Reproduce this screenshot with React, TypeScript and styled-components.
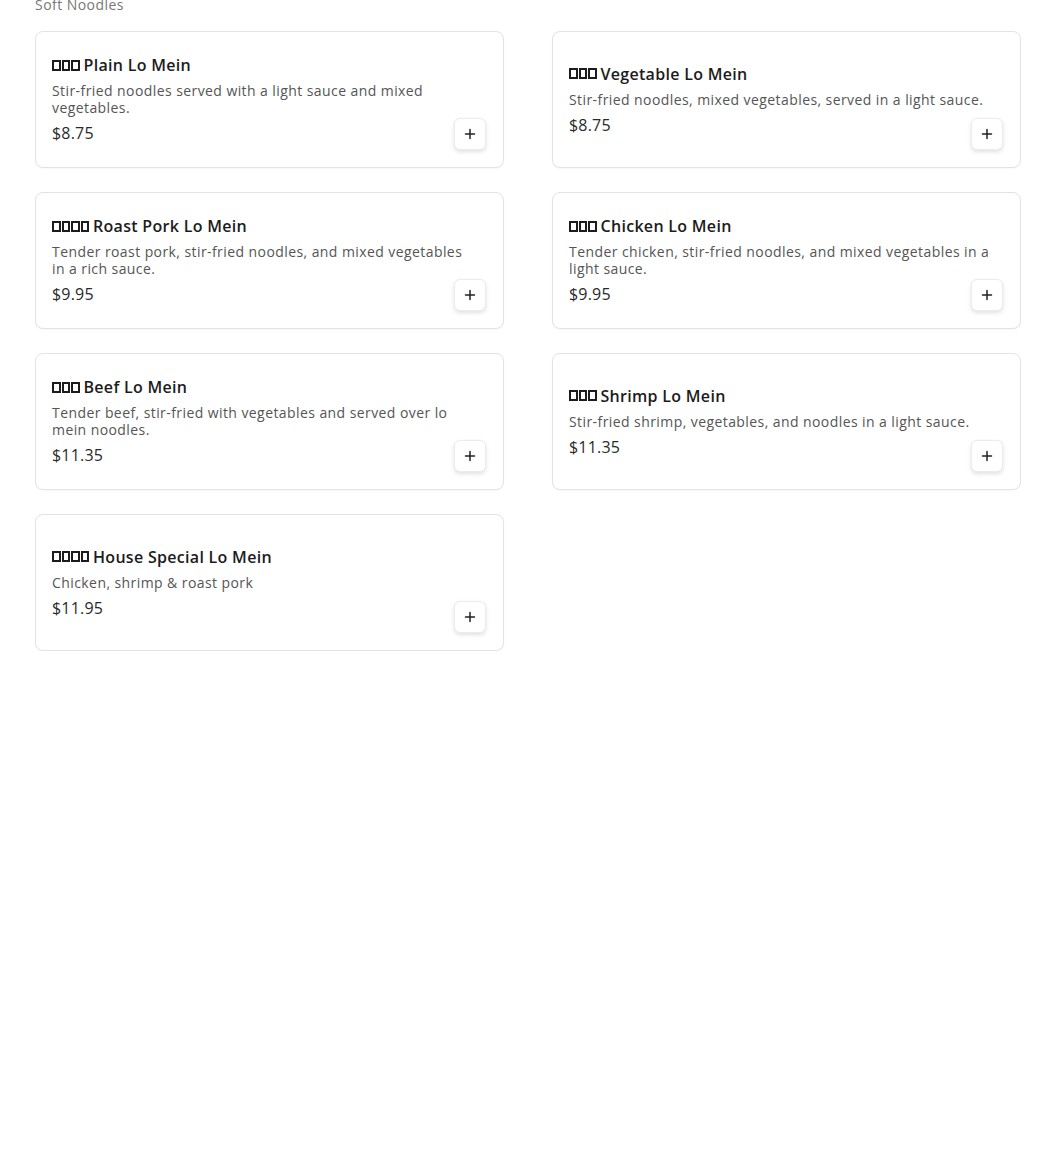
import React from "react";
import styled, { createGlobalStyle } from "styled-components";

const GlobalStyle = createGlobalStyle`
  html, body { margin: 0; padding: 0; background: #ffffff; }
  body { font-family: "Open Sans", "Noto Sans", sans-serif; color: #1a1a1a; }
`;

const Page = styled.main`
  padding: 0 29px 0 35px;
  margin-top: -5px;
`;

const SectionTitle = styled.h2`
  margin: 0 0 16px;
  font-size: 14px;
  line-height: 20px;
  font-weight: 400;
  letter-spacing: 0.45px;
  color: #777777;
`;

const Grid = styled.div`
  display: grid;
  grid-template-columns: 469px 469px;
  column-gap: 48px;
  row-gap: 24px;
`;

const Card = styled.article`
  box-sizing: border-box;
  min-height: 137px;
  display: grid;
  grid-template-areas: "stack";
  padding: 16px;
  border: 1px solid #e3e3e3;
  border-radius: 8px;
  background: #fff;
  box-shadow: 0 1px 2px rgba(0, 0, 0, 0.03);
`;

const Info = styled.div`
  grid-area: stack;
  align-self: center;
  min-width: 0;
  padding-right: 9px;
  margin-bottom: 1px;
`;

const Name = styled.h3`
  margin: 0;
  display: flex;
  align-items: center;
  font-size: 16px;
  line-height: 24px;
  font-weight: 600;
  letter-spacing: 0.3px;
  color: #1c1c1c;
`;

const Tofus = styled.span`
  display: inline-flex;
  gap: 1px;
  margin-right: 4px;
`;

const Tofu = styled.span`
  display: inline-block;
  box-sizing: border-box;
  width: 8.5px;
  height: 11px;
  border: 2px solid #1c1c1c;
`;

const Desc = styled.p`
  margin: 5px 0 0;
  font-size: 14px;
  line-height: 17px;
  letter-spacing: 0.42px;
  color: #555555;
`;

const Price = styled.div`
  margin-top: 5px;
  font-size: 16px;
  line-height: 24px;
  letter-spacing: 0.2px;
  color: #2a2a2a;
`;

const AddButton = styled.button`
  grid-area: stack;
  align-self: end;
  justify-self: end;
  width: 32px;
  height: 32px;
  margin: 0 1px 1px 0;
  display: flex;
  align-items: center;
  justify-content: center;
  padding: 0;
  border: 1px solid #ececec;
  border-radius: 6px;
  background: #fff;
  box-shadow: 0 2px 4px rgba(0, 0, 0, 0.12);
  cursor: pointer;
`;

const items = [
  { glyphs: 3, name: "Plain Lo Mein", desc: "Stir-fried noodles served with a light sauce and mixed vegetables.", price: "$8.75" },
  { glyphs: 3, name: "Vegetable Lo Mein", desc: "Stir-fried noodles, mixed vegetables, served in a light sauce.", price: "$8.75" },
  { glyphs: 4, name: "Roast Pork Lo Mein", desc: "Tender roast pork, stir-fried noodles, and mixed vegetables in a rich sauce.", price: "$9.95" },
  { glyphs: 3, name: "Chicken Lo Mein", desc: "Tender chicken, stir-fried noodles, and mixed vegetables in a light sauce.", price: "$9.95" },
  { glyphs: 3, name: "Beef Lo Mein", desc: "Tender beef, stir-fried with vegetables and served over lo mein noodles.", price: "$11.35" },
  { glyphs: 3, name: "Shrimp Lo Mein", desc: "Stir-fried shrimp, vegetables, and noodles in a light sauce.", price: "$11.35" },
  { glyphs: 4, name: "House Special Lo Mein", desc: "Chicken, shrimp & roast pork", price: "$11.95" },
];

const Plus = () => (
  <svg width="12" height="12" viewBox="0 0 12 12" fill="none">
    <path d="M6 1.5v9M1.5 6h9" stroke="#222" strokeWidth="1.5" strokeLinecap="round" />
  </svg>
);

export default function App() {
  return (
    <Page>
      <GlobalStyle />
      <SectionTitle>Soft Noodles</SectionTitle>
      <Grid>
        {items.map((it) => (
          <Card key={it.name}>
            <Info>
              <Name>
                <Tofus aria-hidden="true">
                  {Array.from({ length: it.glyphs }).map((_, i) => (
                    <Tofu key={i} />
                  ))}
                </Tofus>
                {it.name}
              </Name>
              <Desc>{it.desc}</Desc>
              <Price>{it.price}</Price>
            </Info>
            <AddButton aria-label={`Add ${it.name}`}>
              <Plus />
            </AddButton>
          </Card>
        ))}
      </Grid>
    </Page>
  );
}
